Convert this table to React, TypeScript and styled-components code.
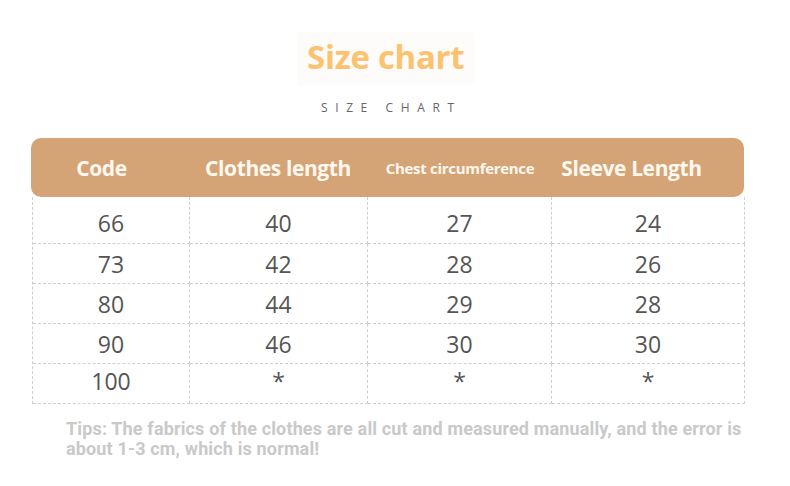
import styled, { createGlobalStyle } from "styled-components";

const GlobalStyle = createGlobalStyle`
  html, body {
    margin: 0;
    padding: 0;
    background: #ffffff;
  }
`;

const COLUMNS = "157px 178px 184px 193px";

// shift: the header labels sit a little off the column centres in the original
const headers = [
  { label: "Code", small: false, shift: -8 },
  { label: "Clothes length", small: false, shift: 1 },
  { label: "Chest circumference", small: true, shift: 2 },
  { label: "Sleeve Length", small: false, shift: -15 },
];

const rows = [
  ["66", "40", "27", "24"],
  ["73", "42", "28", "26"],
  ["80", "44", "29", "28"],
  ["90", "46", "30", "30"],
  ["100", "*", "*", "*"],
];

function App() {
  return (
    <Page>
      <GlobalStyle />
      <TitleBox>
        <Title>Size chart</Title>
      </TitleBox>
      <Subtitle>SIZE CHART</Subtitle>

      <Table>
        <HeaderRow>
          {headers.map((h) => (
            <HeaderCell key={h.label} $small={h.small} $shift={h.shift}>
              {h.label}
            </HeaderCell>
          ))}
        </HeaderRow>
        <Body>
          {rows.map((row, r) =>
            row.map((value, c) => (
              <Cell key={`${r}-${c}`} $first={r === 0} $lastRow={r === rows.length - 1}>
                {value}
              </Cell>
            ))
          )}
        </Body>
      </Table>

      <Tips>
        Tips: The fabrics of the clothes are all cut and measured manually, and the error is
        about 1-3 cm, which is normal!
      </Tips>
    </Page>
  );
}

const Page = styled.div`
  width: 790px;
  height: 486px;
  box-sizing: border-box;
  padding: 32px 0 0 31px;
  display: flex;
  flex-direction: column;
  align-items: flex-start;
  font-family: "Open Sans", "Noto Sans", sans-serif;
  overflow: hidden;
`;

const TitleBox = styled.div`
  margin-left: 266px;
  padding: 2px 10px 6px;
  background: #fdfcfa;
  border-radius: 4px;
`;

const Title = styled.h1`
  margin: 0;
  font-size: 33px;
  line-height: 46px;
  font-weight: 700;
  color: #fcc26f;
  letter-spacing: -0.3px;
`;

const Subtitle = styled.div`
  margin: 14px 0 0 290px;
  font-size: 12px;
  line-height: 16px;
  letter-spacing: 7.6px;
  color: #666666;
`;

const Table = styled.div`
  margin-top: 22px;
  width: 713px;
  display: flex;
  flex-direction: column;
`;

const HeaderRow = styled.div`
  display: grid;
  grid-template-columns: ${COLUMNS};
  height: 59px;
  background: #d4a477;
  border-radius: 10px;
  align-items: center;
`;

const HeaderCell = styled.div<{ $small: boolean; $shift: number }>`
  text-align: center;
  color: #fff8ee;
  font-weight: 700;
  font-size: ${(p) => (p.$small ? "15px" : "21px")};
  letter-spacing: ${(p) => (p.$small ? "-0.3px" : "-0.4px")};
  margin-left: ${(p) => p.$shift * 2}px;
`;

const Body = styled.div`
  display: grid;
  grid-template-columns: ${COLUMNS};
  margin-left: 1px;
  border-left: 1px dashed #cfcfcf;
`;

const Cell = styled.div<{ $first: boolean; $lastRow: boolean }>`
  height: ${(p) => (p.$first ? "47px" : "40px")};
  display: flex;
  align-items: ${(p) => (p.$lastRow ? "flex-start" : "center")};
  justify-content: center;
  padding-top: ${(p) => (p.$first ? "5px" : "0")};
  line-height: ${(p) => (p.$lastRow ? "34px" : "normal")};
  box-sizing: border-box;
  border-right: 1px dashed #cfcfcf;
  border-bottom: 1px dashed #cfcfcf;
  font-size: 23px;
  color: #555555;
`;

const Tips = styled.p`
  margin: 15px 0 0 35px;
  width: 690px;
  font-family: Roboto, "Liberation Sans", sans-serif;
  font-weight: 700;
  font-size: 18px;
  line-height: 20px;
  letter-spacing: 0.15px;
  color: #c9c9c9;
`;

export default App;
